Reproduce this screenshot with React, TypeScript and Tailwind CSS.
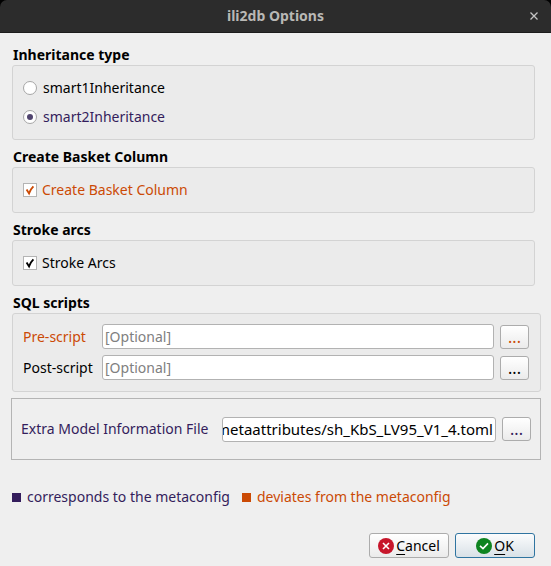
import { useEffect, useRef, useState, type ReactNode } from "react";

type Tone = "plain" | "match" | "deviate";

const toneText: Record<Tone, string> = {
  plain: "text-black",
  match: "text-[#341d5c]",
  deviate: "text-[#cb4a05]",
};

function Group({ title, children, className = "" }: { title: string; children: ReactNode; className?: string }) {
  return (
    <fieldset className={`min-w-0 ${className}`}>
      <legend className="h-5 pl-px font-bold leading-5 text-black">{title}</legend>
      <div className="rounded-[3px] border border-[#d3d3d3] bg-[#ebebeb] px-[10px]">{children}</div>
    </fieldset>
  );
}

function RadioOption({ label, tone, checked, onSelect }: { label: string; tone: Tone; checked: boolean; onSelect: () => void }) {
  return (
    <label className={`flex h-[29px] items-center gap-[6px] ${toneText[tone]}`}>
      <span className="grid size-[14px] place-items-center">
        <input
          type="radio"
          name="inheritance"
          checked={checked}
          onChange={onSelect}
          className="peer col-start-1 row-start-1 size-[14px] appearance-none rounded-full border border-[#a6a6a6] bg-white"
        />
        <span className="pointer-events-none col-start-1 row-start-1 size-[6px] rounded-full bg-[#51456f] opacity-0 peer-checked:opacity-100" />
      </span>
      {label}
    </label>
  );
}

function CheckOption({ label, tone }: { label: string; tone: Tone }) {
  return (
    <label className={`flex h-11 items-center gap-[5px] ${toneText[tone]}`}>
      <span className="grid size-[14px] place-items-center">
        <input
          type="checkbox"
          defaultChecked
          className="peer col-start-1 row-start-1 size-[14px] appearance-none border border-[#b4b4b4] bg-white"
        />
        <svg
          viewBox="0 0 14 14"
          className="pointer-events-none col-start-1 row-start-1 size-[14px] opacity-0 peer-checked:opacity-100"
          fill="none"
          stroke="currentColor"
          aria-hidden="true"
        >
          <path d="M3.6 6.6 L6 10.4 Q7.4 6.4 10.4 3.4" strokeWidth="1.9" />
        </svg>
      </span>
      {label}
    </label>
  );
}

function BrowseButton({ label, tone }: { label: string; tone: Tone }) {
  return (
    <button
      type="button"
      aria-label={label}
      className={`h-6 w-[29px] shrink-0 rounded-[3px] border border-[#acacac] bg-linear-to-b from-white to-[#ebebeb] text-center text-base leading-5 ${toneText[tone]}`}
    >
      ...
    </button>
  );
}

const fieldClass =
  "h-[25px] min-w-0 flex-1 rounded-[3px] border border-[#b2b2b2] bg-white text-black placeholder:text-[#808080]";

function ScriptRow({ id, label, tone }: { id: string; label: string; tone: Tone }) {
  return (
    <div className="flex items-center gap-[6px]">
      <label htmlFor={id} className={`w-[73px] shrink-0 whitespace-nowrap ${toneText[tone]}`}>
        {label}
      </label>
      <input id={id} type="text" placeholder="[Optional]" className={`${fieldClass} px-[2px]`} />
      <BrowseButton label={`Browse ${label}`} tone={tone} />
    </div>
  );
}

function ModelInfoRow() {
  const field = useRef<HTMLInputElement>(null);
  useEffect(() => {
    if (field.current) field.current.scrollLeft = field.current.scrollWidth;
  }, []);
  return (
    <div className="flex h-[62px] items-center gap-[6px] border border-[#b4b4b4] px-[9px]">
      <label htmlFor="model-info" className="w-[195px] shrink-0 whitespace-nowrap text-[#341d5c]">
        Extra Model Information File
      </label>
      <input
        ref={field}
        id="model-info"
        type="text"
        defaultValue="metaattributes/sh_KbS_LV95_V1_4.toml"
        className={`${fieldClass} pr-[2px] text-[15px]`}
      />
      <BrowseButton label="Browse Extra Model Information File" tone="match" />
    </div>
  );
}

export default function App() {
  const [mode, setMode] = useState(2);
  return (
    <div className="bg-black font-['Noto_Sans',sans-serif] text-[14px] leading-5">
      <header className="grid h-[33px] grid-cols-[40px_1fr_40px] items-center rounded-t-[7px] border-b border-[#1c1c1c] bg-[#2c2c2c]">
        <h1 className="col-start-2 text-center font-bold text-[#b9b8b5]">ili2db Options</h1>
        <button type="button" aria-label="Close" className="flex h-7 items-center justify-end pr-[13px] text-[#c4c4c4]">
          <svg viewBox="0 0 8 8" className="size-2" fill="none" stroke="currentColor" strokeWidth="1.3" aria-hidden="true">
            <path d="M0.5 0.5 L7.5 7.5 M7.5 0.5 L0.5 7.5" />
          </svg>
        </button>
      </header>

      <form className="bg-[#efefef] pt-3 pr-[10px] pb-2 pl-[11px]" onSubmit={(e) => e.preventDefault()}>
        <div className="flex flex-col gap-[7px] pr-[6px] pl-px">
          <Group title="Inheritance type">
            <div className="pt-[7px] pb-2">
              <RadioOption label="smart1Inheritance" tone="plain" checked={mode === 1} onSelect={() => setMode(1)} />
              <RadioOption label="smart2Inheritance" tone="match" checked={mode === 2} onSelect={() => setMode(2)} />
            </div>
          </Group>
          <Group title="Create Basket Column">
            <CheckOption label="Create Basket Column" tone="deviate" />
          </Group>
          <Group title="Stroke arcs">
            <CheckOption label="Stroke Arcs" tone="plain" />
          </Group>
        </div>

        <Group title="SQL scripts" className="mt-[7px] pl-px">
          <div className="flex flex-col gap-[6px] pt-[10px] pr-px pb-[11px]">
            <ScriptRow id="pre-script" label="Pre-script" tone="deviate" />
            <ScriptRow id="post-script" label="Post-script" tone="plain" />
          </div>
        </Group>

        <div className="mt-[6px]">
          <ModelInfoRow />
        </div>

        <div className="mt-[27px] flex items-center gap-[5px] pl-px whitespace-nowrap">
          <span className="flex min-w-[225px] items-center gap-[6px] text-[#341d5c]">
            <span className="size-[9px] bg-current" />
            corresponds to the metaconfig
          </span>
          <span className="flex items-center gap-[6px] text-[#cb4a05]">
            <span className="size-[9px] bg-current" />
            deviates from the metaconfig
          </span>
        </div>

        <div className="mt-[26px] flex justify-end gap-[6px] pr-[6px]">
          <button
            type="button"
            className="flex h-[25px] w-20 items-center justify-center gap-[2px] rounded-[3px] border border-[#acacac] bg-linear-to-b from-white to-[#ebebeb] text-black"
          >
            <svg viewBox="0 0 16 16" className="size-4 shrink-0" aria-hidden="true">
              <circle cx="8" cy="8" r="8" fill="#c7162b" />
              <path d="M5 5 L11 11 M11 5 L5 11" stroke="#fff" strokeWidth="1.6" />
            </svg>
            <span>
              <u className="underline-offset-[3px]">C</u>ancel
            </span>
          </button>
          <button
            type="submit"
            className="flex h-[25px] w-20 items-center justify-center gap-[2px] rounded-[3px] border border-[#2f74a0] bg-linear-to-b from-[#fbfcfd] to-[#d9e1e7] text-black"
          >
            <svg viewBox="0 0 16 16" className="size-4 shrink-0" aria-hidden="true">
              <circle cx="8" cy="8" r="8" fill="#0e8420" />
              <path d="M4 7.8 L7 10.6 L12 5.4" fill="none" stroke="#fff" strokeWidth="1.6" />
            </svg>
            <span>
              <u className="underline-offset-[3px]">O</u>K
            </span>
          </button>
        </div>
      </form>
    </div>
  );
}
